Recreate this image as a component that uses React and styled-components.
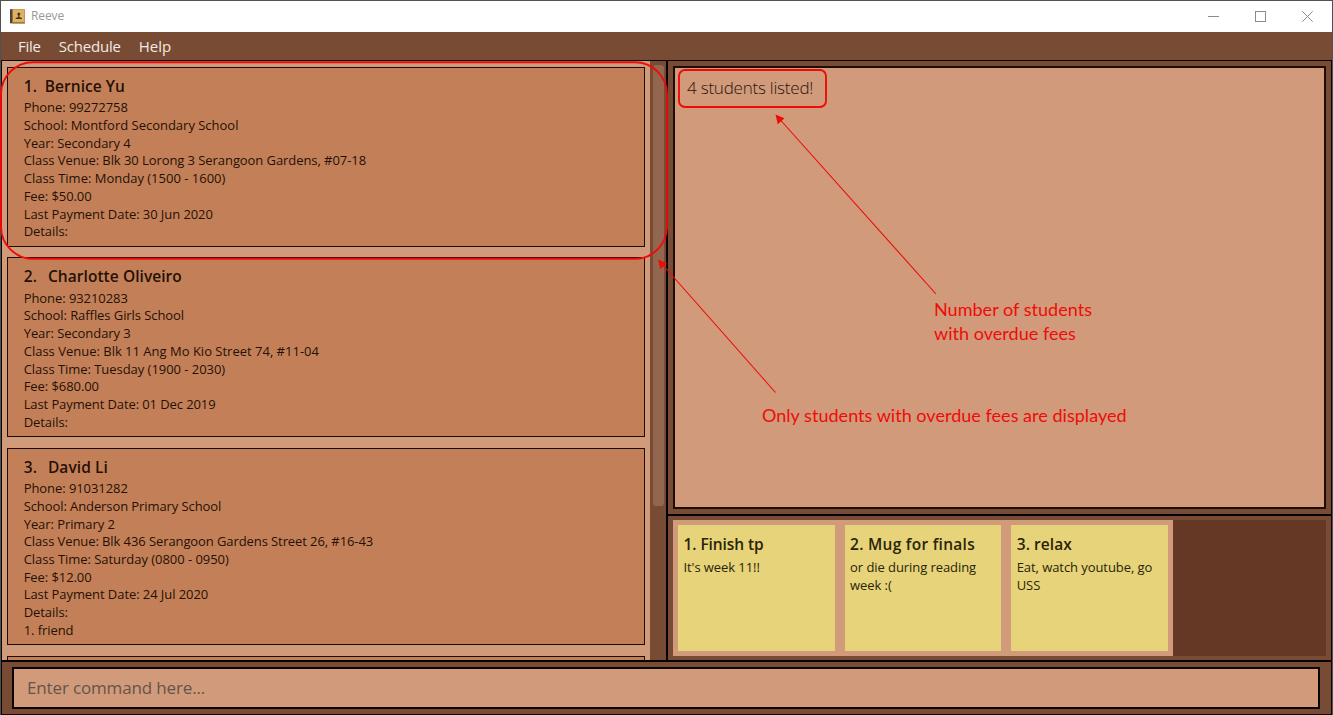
import React from "react";
import styled, { createGlobalStyle } from "styled-components";

const UI = `"Open Sans", "Noto Sans", sans-serif`;

const Global = createGlobalStyle`
  * { box-sizing: border-box; }
  html, body { margin: 0; padding: 0; }
  body { width: 1333px; height: 715px; overflow: hidden; background: #4b4d4a; font-family: ${UI}; }
`;

const Desktop = styled.div`
  position: relative;
  width: 1333px;
  height: 715px;
  padding: 1px 1px 0;
  background: #50524f;
  overflow: hidden;
`;

const Window = styled.div`
  height: 714px;
  display: flex;
  flex-direction: column;
  background: #784c34;
`;

const TitleBar = styled.header`
  flex: none;
  height: 31px;
  display: flex;
  align-items: center;
  padding: 0 0 1px 9px;
  background: #fff;
`;

const AppTitle = styled.span`
  flex: 1;
  margin-left: 6px;
  font-size: 12px;
  line-height: 16px;
  letter-spacing: -0.1px;
  color: #999;
`;

const WindowButtons = styled.div`
  display: flex;
  width: 142px;
  height: 29px;
`;

const WindowButton = styled.span`
  width: 47px;
  height: 29px;
  display: grid;
  place-items: center;
  color: #8b8b8b;
`;

const MenuBar = styled.nav`
  flex: none;
  height: 28px;
  display: flex;
  align-items: center;
  gap: 18px;
  padding-left: 17px;
`;

const MenuItem = styled.span`
  font-size: 15px;
  line-height: 20px;
  letter-spacing: ${(p) => p.$ls}px;
  color: #f4e9e2;
`;

const Body = styled.div`
  flex: none;
  height: 655px;
  border: 1px solid #0c0503;
  display: flex;
  flex-direction: column;
`;

const Main = styled.main`
  height: 599px;
  display: flex;
`;

const StudentPane = styled.section`
  width: 666px;
  display: flex;
  border-right: 2px solid #050201;
`;

const StudentList = styled.div`
  width: 649px;
  padding: 6px 5px 0 5px;
  display: flex;
  flex-direction: column;
  gap: 10.4px;
  overflow: hidden;
  background: #d19a7a;
`;

const Card = styled.article`
  flex: none;
  height: ${(p) => p.$h}px;
  padding: 6px 15.7px;
  border: 1px solid #1c0c04;
  background: #c38058;
  color: #261005;
  white-space: nowrap;
`;

const CardTitle = styled.h2`
  margin: 0;
  display: flex;
  gap: ${(p) => p.$gap}px;
  height: 25.4px;
  font-size: 15.5px;
  line-height: 24px;
  font-weight: 600;
  letter-spacing: 0.06px;
`;

const Detail = styled.div`
  height: 17.7px;
  font-size: 13px;
  line-height: 17.7px;
  letter-spacing: ${(p) => p.$ls ?? -0.07}px;
`;

const ScrollTrack = styled.div`
  flex: 1;
  padding: 4px 2px 0 3px;
  background: #774b34;
`;

const ScrollThumb = styled.div`
  height: 441px;
  width: 11px;
  border-radius: 3px;
  background: #93664f;
`;

const SidePane = styled.section`
  flex: 1;
  display: flex;
  flex-direction: column;
`;

const ResultPane = styled.div`
  height: 455px;
  padding: 5px 5px 5px;
  border-bottom: 2px solid #050201;
`;

const ResultBox = styled.div`
  height: 443px;
  padding: 8px 12px;
  border: 2px solid #1e0d06;
  background: #d19a7a;
  font-size: 17px;
  font-weight: 300;
  line-height: 24px;
  letter-spacing: -0.22px;
  color: #2b160c;
`;

const NotesPane = styled.div`
  flex: 1;
  padding: 4px 5px 4px;
`;

const NotesBoard = styled.div`
  height: 136px;
  display: flex;
  background: #643824;
`;

const NoteCell = styled.div`
  width: 166.6px;
  padding: 5px;
  background: #d19a7a;
`;

const Note = styled.article`
  height: 126px;
  padding: 7px 5.5px;
  background: #e6d37a;
  color: #2a2407;
  white-space: nowrap;
`;

const NoteTitle = styled.h3`
  margin: 0;
  height: 27px;
  font-size: 15.5px;
  font-weight: 600;
  line-height: 24px;
  letter-spacing: ${(p) => p.$ls}px;
`;

const CommandBar = styled.footer`
  flex: 1;
  padding: 5px 11px 5px 10px;
  border-top: 2px solid #050201;
`;

const CommandField = styled.div`
  height: 42px;
  padding: 0 13px;
  border: 2px solid #0c0503;
  background: #d19a7a;
  font-size: 17px;
  line-height: 38px;
  letter-spacing: -0.15px;
  color: #65544b;
`;

const Annotations = styled.svg`
  position: absolute;
  inset: 0;
  fill: none;
  stroke: #ee0c08;
`;

const Callout = styled.p`
  position: absolute;
  left: ${(p) => p.$x}px;
  top: ${(p) => p.$y}px;
  margin: 0;
  font-family: Lato, sans-serif;
  font-size: 18px;
  line-height: 24px;
  letter-spacing: 0.03px;
  white-space: nowrap;
  color: #ee0c08;
`;

const BookIcon = () => (
  <svg width="15" height="15" viewBox="0 0 15 15">
    <rect x="0" y="0" width="15" height="14.600" rx="0.8" fill="#b98d47" />
    <rect x="3" y="0.6" width="11.3" height="12.6" fill="#dcb264" />
    <rect x="0" y="0.3" width="2.300" height="13.800" fill="#4c4438" />
    <rect x="2.300" y="13" width="12.500" height="1.5" fill="#a07838" />
    <circle cx="8.8" cy="5.1" r="1.5" fill="#4a3518" />
    <path d="M8.200 6h1.200v2.100l2.500 0.900v1.100H5.700V9l2.500-0.900z" fill="#4a3518" />
  </svg>
);

const students = [
  {
    name: "Bernice Yu", gap: 7.8, h: 180,
    lines: [["Phone: 99272758"], ["School: Montford Secondary School", -0.01], ["Year: Secondary 4"], ["Class Venue: Blk 30 Lorong 3 Serangoon Gardens, #07-18"], ["Class Time: Monday (1500 - 1600)", 0], ["Fee: $50.00"], ["Last Payment Date: 30 Jun 2020"], ["Details:"]],
  },
  {
    name: "Charlotte Oliveiro", gap: 11, h: 180,
    lines: [["Phone: 93210283"], ["School: Raffles Girls School"], ["Year: Secondary 3"], ["Class Venue: Blk 11 Ang Mo Kio Street 74, #11-04", 0], ["Class Time: Tuesday (1900 - 2030)", -0.04], ["Fee: $680.00"], ["Last Payment Date: 01 Dec 2019", -0.1], ["Details:"]],
  },
  {
    name: "David Li", gap: 11, h: 197.6,
    lines: [["Phone: 91031282"], ["School: Anderson Primary School", -0.09], ["Year: Primary 2"], ["Class Venue: Blk 436 Serangoon Gardens Street 26, #16-43", -0.09], ["Class Time: Saturday (0800 - 0950)", -0.04], ["Fee: $12.00"], ["Last Payment Date: 24 Jul 2020"], ["Details:"], ["1. friend"]],
  },
];

const notes = [
  { title: "1. Finish tp", ls: -0.08, lines: ["It's week 11!!"] },
  { title: "2. Mug for finals", ls: 0.27, lines: ["or die during reading", "week :("] },
  { title: "3. relax", ls: 0.08, lines: ["Eat, watch youtube, go", "USS"] },
];

export default function App() {
  return (
    <Desktop>
      <Global />
      <Window>
        <TitleBar>
          <BookIcon />
          <AppTitle>Reeve</AppTitle>
          <WindowButtons>
            <WindowButton>
              <svg width="11" height="11" stroke="currentColor"><path d="M0 5.500h11" /></svg>
            </WindowButton>
            <WindowButton>
              <svg width="11" height="11" fill="none" stroke="currentColor"><rect x="0.5" y="0.5" width="10" height="10" /></svg>
            </WindowButton>
            <WindowButton>
              <svg width="11" height="11" stroke="currentColor"><path d="M0.300 0.300l10.400 10.400M10.700 0.300L0.300 10.700" /></svg>
            </WindowButton>
          </WindowButtons>
        </TitleBar>
        <MenuBar>
          <MenuItem $ls={-0.25}>File</MenuItem>
          <MenuItem $ls={-0.2}>Schedule</MenuItem>
          <MenuItem $ls={-0.05}>Help</MenuItem>
        </MenuBar>
        <Body>
          <Main>
            <StudentPane>
              <StudentList>
                {students.map((s, i) => (
                  <Card key={s.name} $h={s.h}>
                    <CardTitle $gap={s.gap}>
                      <span>{i + 1}.</span>
                      <span>{s.name}</span>
                    </CardTitle>
                    {s.lines.map(([line, ls]) => <Detail key={line} $ls={ls}>{line}</Detail>)}
                  </Card>
                ))}
                <Card $h={180} />
              </StudentList>
              <ScrollTrack><ScrollThumb /></ScrollTrack>
            </StudentPane>
            <SidePane>
              <ResultPane>
                <ResultBox>4 students listed!</ResultBox>
              </ResultPane>
              <NotesPane>
                <NotesBoard>
                  {notes.map((n) => (
                    <NoteCell key={n.title}>
                      <Note>
                        <NoteTitle $ls={n.ls}>{n.title}</NoteTitle>
                        {n.lines.map((line) => <Detail key={line}>{line}</Detail>)}
                      </Note>
                    </NoteCell>
                  ))}
                </NotesBoard>
              </NotesPane>
            </SidePane>
          </Main>
          <CommandBar>
            <CommandField>Enter command here...</CommandField>
          </CommandBar>
        </Body>
      </Window>
      <Annotations width="1333" height="715">
        <rect x="1" y="62.300" width="666" height="196.500" rx="32" strokeWidth="1.9" />
        <rect x="679" y="70" width="147" height="37" rx="6" strokeWidth="1.9" />
        <path d="M936 294L780 119.500M775.500 392.500L662 264" strokeWidth="1.1" />
        <path d="M775.500 114.500l9 3.700-6.700 6zM658 259.500l9 3.700-6.700 6z" fill="#ee0c08" stroke="none" />
      </Annotations>
      <Callout $x={934} $y={297}>Number of students<br />with overdue fees</Callout>
      <Callout $x={762} $y={403}>Only students with overdue fees are displayed</Callout>
    </Desktop>
  );
}
